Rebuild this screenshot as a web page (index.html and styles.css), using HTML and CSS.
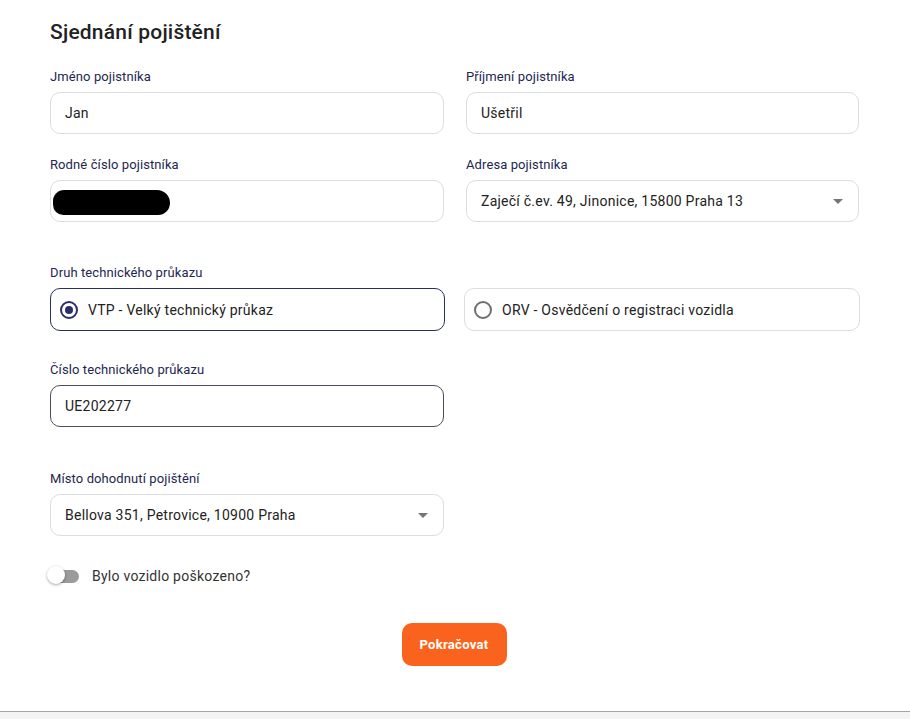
FILE: index.html
```html
<!DOCTYPE html>
<html lang="cs">
<head>
<meta charset="utf-8">
<title>Sjednání pojištění</title>
<link rel="stylesheet" href="styles.css">
</head>
<body>
<main class="page">
  <h1 class="title">Sjednání pojištění</h1>

  <div class="grid row-1">
    <div class="field">
      <label class="label">Jméno pojistníka</label>
      <div class="control"><span class="value">Jan</span></div>
    </div>
    <div class="field">
      <label class="label">Příjmení pojistníka</label>
      <div class="control"><span class="value">Ušetřil</span></div>
    </div>
  </div>

  <div class="grid row-2">
    <div class="field">
      <label class="label">Rodné číslo pojistníka</label>
      <div class="control control-redacted"><span class="redact"></span></div>
    </div>
    <div class="field">
      <label class="label">Adresa pojistníka</label>
      <div class="control control-select"><span class="value">Zaječí č.ev. 49, Jinonice, 15800 Praha 13</span><span class="caret"></span></div>
    </div>
  </div>

  <div class="field row-3">
    <label class="label">Druh technického průkazu</label>
    <div class="grid radios">
      <div class="radio-box radio-box-on"><span class="radio radio-on"></span><span class="value">VTP - Velký technický průkaz</span></div>
      <div class="radio-box"><span class="radio"></span><span class="value">ORV - Osvědčení o registraci vozidla</span></div>
    </div>
  </div>

  <div class="grid row-4">
    <div class="field">
      <label class="label">Číslo technického průkazu</label>
      <div class="control control-focus"><span class="value">UE202277</span></div>
    </div>
  </div>

  <div class="grid row-5">
    <div class="field">
      <label class="label">Místo dohodnutí pojištění</label>
      <div class="control control-select"><span class="value">Bellova 351, Petrovice, 10900 Praha</span><span class="caret"></span></div>
    </div>
  </div>

  <div class="toggle-row">
    <span class="toggle"><span class="track"></span><span class="thumb"></span></span>
    <span class="toggle-label">Bylo vozidlo poškozeno?</span>
  </div>

  <div class="actions">
    <button class="btn">Pokračovat</button>
  </div>
</main>
<div class="footer"></div>
</body>
</html>
```
FILE: styles.css
```css
* { box-sizing: border-box; }
html, body { margin: 0; padding: 0; background: #fff; }
body {
  font-family: Roboto, "Liberation Sans", Arial, sans-serif;
  color: #222;
  width: 910px;
  height: 719px;
  overflow: hidden;
  display: flex;
  flex-direction: column;
}
.page {
  padding: 19px 0 0 50px;
  width: 860px;
  height: 711px;
}
.title {
  margin: 0;
  font-size: 21px;
  font-weight: 500;
  letter-spacing: 0.2px;
  line-height: 26px;
  color: #222;
}
.grid {
  display: grid;
  grid-template-columns: 394px 393px;
  column-gap: 22px;
}
.field { display: flex; flex-direction: column; }
.label {
  font-size: 13px;
  font-weight: 400;
  letter-spacing: 0.1px;
  line-height: 16px;
  color: #23274f;
  margin-bottom: 7px;
}
.row-1 { margin-top: 24px; }
.row-2 { margin-top: 23px; }
.row-3 { margin-top: 43px; }
.row-4 { margin-top: 31px; }
.row-5 { margin-top: 44px; }
.control {
  height: 42px;
  border: 1px solid #dcdce3;
  border-radius: 10px;
  display: flex;
  align-items: center;
  padding: 0 14px;
  background: #fff;
}
.value {
  font-size: 14px;
  letter-spacing: 0.25px;
  color: #222;
  line-height: 18px;
  white-space: nowrap;
}
.control-focus { border-color: #4b4e63; }
.control-redacted { padding-left: 2px; }
.redact {
  display: block;
  width: 117px;
  height: 25px;
  background: #000;
  border-radius: 12px 14px 13px 11px;
  margin-top: 2px;
}
.control-select { justify-content: space-between; padding-right: 14px; }
.caret {
  width: 0; height: 0;
  border-left: 5px solid transparent;
  border-right: 5px solid transparent;
  border-top: 5px solid #757575;
  margin-right: 1px;
}
.radios { margin-top: 0; column-gap: 19px; grid-template-columns: 395px 396px; }
.radio-box {
  height: 43px;
  border: 1px solid #dcdce3;
  border-radius: 10px;
  display: flex;
  align-items: center;
  padding-left: 9px;
  gap: 10px;
}
.radio-box-on { border-color: #2b2e62; }
.radio {
  width: 18px; height: 18px;
  border: 2px solid #6f6f6f;
  border-radius: 50%;
  display: flex;
  align-items: center;
  justify-content: center;
}
.radio-on { border-color: #2b2e6a; }
.radio-on::after {
  content: "";
  width: 8px; height: 8px;
  border-radius: 50%;
  background: #2b2e6a;
}
.toggle-row {
  margin-top: 29px;
  display: flex;
  align-items: center;
  gap: 12px;
  height: 22px;
  margin-left: -3px;
}
.toggle { position: relative; width: 33px; height: 20px; display: block; }
.track {
  position: absolute;
  left: 4px; top: 4px;
  width: 28px; height: 13px;
  border-radius: 7px;
  background: #9b9b9b;
}
.thumb {
  position: absolute;
  left: 0; top: 0;
  width: 18px; height: 18px;
  border-radius: 50%;
  background: #fff;
  box-shadow: 0 1px 3px rgba(0,0,0,0.35);
}
.toggle-label { font-size: 14px; letter-spacing: 0.25px; color: #333; }
.actions {
  margin-top: 36px;
  width: 808px;
  display: flex;
  justify-content: center;
}
.btn {
  font-family: Roboto, "Liberation Sans", Arial, sans-serif;
  background: #fa631e;
  color: #fff;
  font-weight: 700;
  font-size: 13px;
  letter-spacing: 0.3px;
  border: none;
  border-radius: 10px;
  width: 105px;
  height: 43px;
  padding: 0;
}
.footer {
  flex: 1;
  border-top: 1px solid #a6a6a6;
  background: #f4f4f4;
}
```
